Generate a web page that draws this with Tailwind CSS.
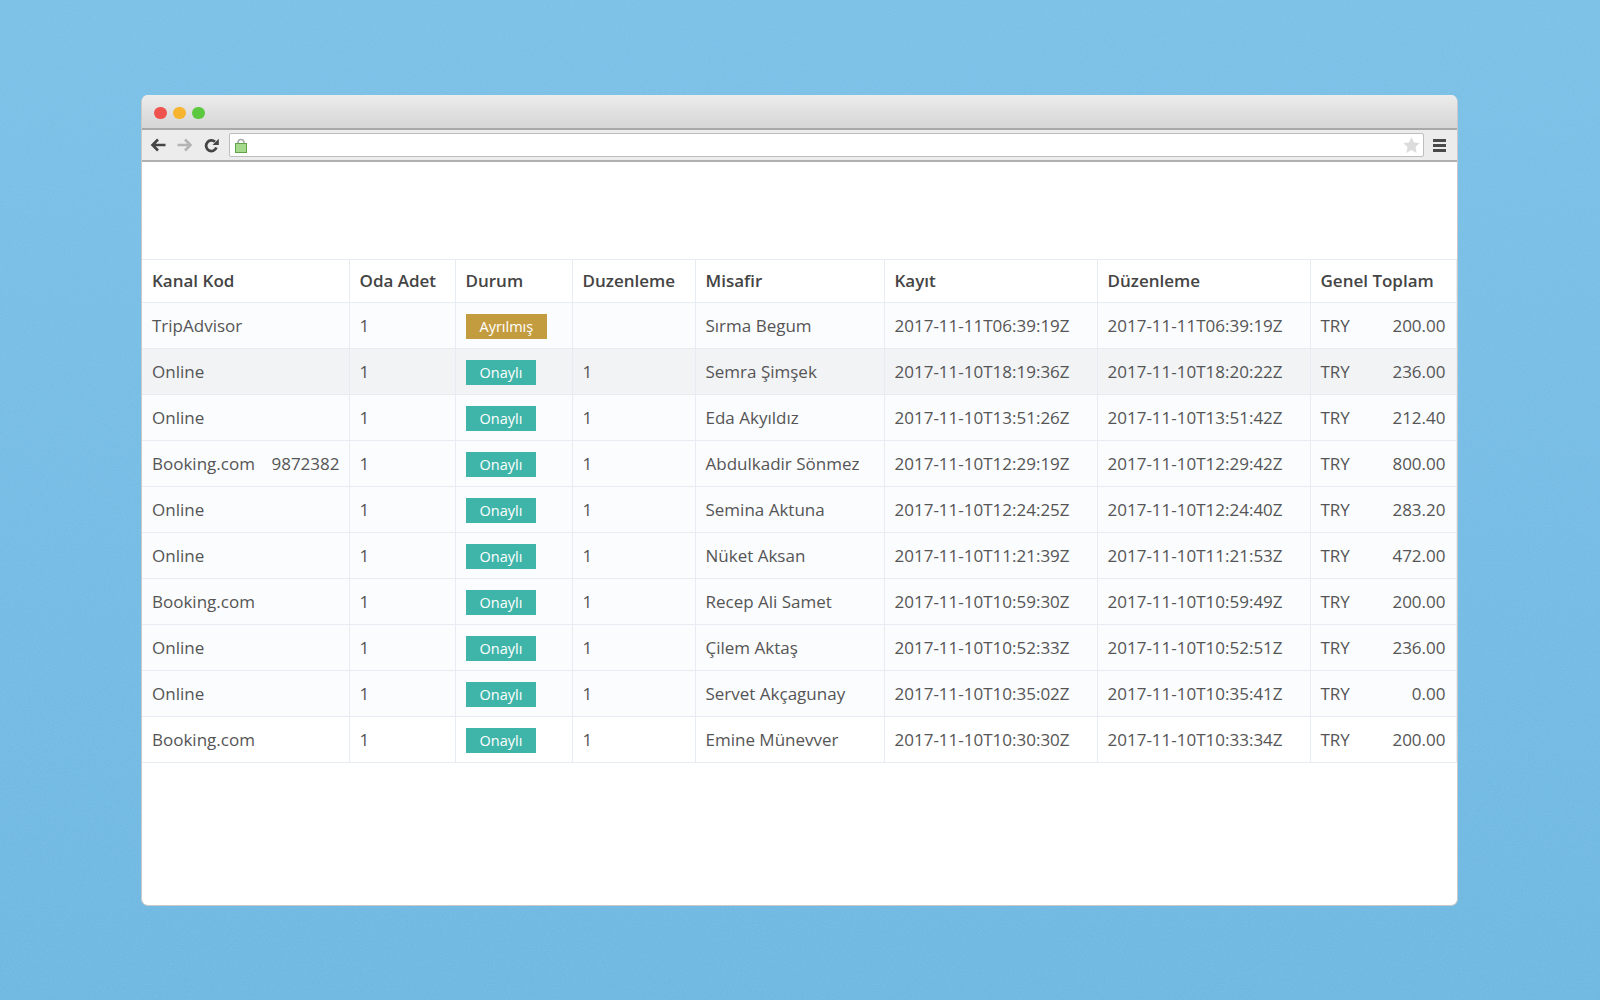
<!DOCTYPE html>
<html>
<head>
<meta charset="utf-8">
<script src="https://cdn.jsdelivr.net/npm/@tailwindcss/browser@4"></script>
</head>
<body class="m-0 relative w-[1600px] h-[1000px] overflow-hidden bg-gradient-to-b from-[#7ac0e7] to-[#6db7e1] font-['Open_Sans',sans-serif]">
<svg class="absolute inset-0 w-full h-full opacity-[0.07]" aria-hidden="true"><filter id="n"><feTurbulence type="fractalNoise" baseFrequency="0.7" numOctaves="2"/><feColorMatrix values="0 0 0 0 1  0 0 0 0 1  0 0 0 0 1  1.500 0 0 0 -0.250"/></filter><rect width="1600" height="1000" filter="url(#n)"/></svg>
<div class="relative pt-[95px] pl-[141px]">
  <div class="w-[1317px] h-[811px] rounded-[7px] overflow-hidden bg-white border border-[#c9c9c9] border-t-0 flex flex-col">
    <div class="h-[35px] shrink-0 bg-gradient-to-b from-[#ececec] to-[#d6d6d6] border-b-2 border-[#a9a9a9] flex items-center gap-[6.5px] pl-[12px] pt-[3px]">
      <span class="w-[12.5px] h-[12.5px] rounded-full bg-[#ef5350]"></span>
      <span class="w-[12.5px] h-[12.5px] rounded-full bg-[#f7b52f]"></span>
      <span class="w-[12.5px] h-[12.5px] rounded-full bg-[#5cc83f]"></span>
    </div>
    <div class="h-[32px] shrink-0 bg-[#ececec] border-b-2 border-[#b0b0b0] flex items-center">
      <div class="w-[87px] shrink-0 flex items-center pl-[8px] gap-[11px]">
        <svg width="16" height="14" viewBox="0 0 16 14" fill="none" stroke="#444" stroke-width="2.6"><path d="M15.500 7H3M8 1.500 2.500 7 8 12.500"/></svg>
        <svg width="16" height="14" viewBox="0 0 16 14" fill="none" stroke="#b4b4b4" stroke-width="2.6"><path d="M.5 7H13M8 1.500 13.500 7 8 12.500"/></svg>
        <svg width="15" height="15" viewBox="0 0 15 15" fill="none"><path d="M12.400 9.600A5.300 5.300 0 1 1 11 3.800" stroke="#444" stroke-width="2.800"/><path d="M8.500 7h6.300V.8z" fill="#444"/></svg>
      </div>
      <div class="w-[1195px] h-[24px] shrink-0 bg-white border border-[#bdbdbd] rounded-[2px] flex items-center justify-between pl-[5px] pr-[3px]">
        <svg width="12" height="15" viewBox="0 0 12 15"><path d="M3 7V4.500a3 3 0 0 1 6 0V7" fill="none" stroke="#aaa" stroke-width="1.600"/><rect x=".5" y="5.500" width="11" height="9" fill="#a5d98b" stroke="#62a24a"/></svg>
        <svg width="17" height="16" viewBox="0 0 24 23"><path d="M12 0l3.600 8 8.400.8-6.300 5.700L19.400 23 12 18.600 4.600 23l1.700-8.500L0 8.800 8.400 8z" fill="#dcdcdc"/></svg>
      </div>
      <div class="ml-[9px] w-[13px] flex flex-col gap-[2px]">
        <span class="h-[3px] bg-[#4a4a4a]"></span><span class="h-[3px] bg-[#4a4a4a]"></span><span class="h-[3px] bg-[#4a4a4a]"></span>
      </div>
    </div>
    <div class="h-[97px] shrink-0"></div>
    <table class="table-fixed border-collapse w-[1314px] text-[17px] leading-[22px] text-[#555]">
      <colgroup>
        <col class="w-[207px]"><col class="w-[106px]"><col class="w-[117px]"><col class="w-[123px]"><col class="w-[189px]"><col class="w-[213px]"><col class="w-[213px]"><col class="w-[146px]">
      </colgroup>
      <thead class="text-[#444] font-semibold text-left">
        <tr class="h-[43px]">
          <th class="border border-[#e7ecf2] border-l-0 px-[10px] font-semibold">Kanal Kod</th>
          <th class="border border-[#e7ecf2] px-[10px] font-semibold">Oda Adet</th>
          <th class="border border-[#e7ecf2] px-[10px] font-semibold">Durum</th>
          <th class="border border-[#e7ecf2] px-[10px] font-semibold">Duzenleme</th>
          <th class="border border-[#e7ecf2] px-[10px] font-semibold">Misafir</th>
          <th class="border border-[#e7ecf2] px-[10px] font-semibold">Kayıt</th>
          <th class="border border-[#e7ecf2] px-[10px] font-semibold">Düzenleme</th>
          <th class="border border-[#e7ecf2] px-[10px] font-semibold">Genel Toplam</th>
        </tr>
      </thead>
      <tbody>
        <tr class="h-[46px] bg-[#fbfcfe]">
          <td class="border border-[#e7ecf2] border-l-0 px-[10px]">TripAdvisor</td>
          <td class="border border-[#e7ecf2] px-[10px]">1</td>
          <td class="border border-[#e7ecf2] px-[10px]"><span class="inline-block align-middle mt-[1px] px-[14px] h-[25px] leading-[25px] text-[14.5px] bg-[#c49c40] text-white">Ayrılmış</span></td>
          <td class="border border-[#e7ecf2] px-[10px]"></td>
          <td class="border border-[#e7ecf2] px-[10px]">Sırma Begum</td>
          <td class="border border-[#e7ecf2] px-[10px]">2017-11-11T06:39:19Z</td>
          <td class="border border-[#e7ecf2] px-[10px]">2017-11-11T06:39:19Z</td>
          <td class="border border-[#e7ecf2] px-[10px]"><div class="flex justify-between"><span>TRY</span><span>200.00</span></div></td>
        </tr>
        <tr class="h-[46px] bg-[#f2f3f5]">
          <td class="border border-[#e7ecf2] border-l-0 px-[10px]">Online</td>
          <td class="border border-[#e7ecf2] px-[10px]">1</td>
          <td class="border border-[#e7ecf2] px-[10px]"><span class="inline-block align-middle mt-[1px] px-[14px] h-[25px] leading-[25px] text-[14.5px] bg-[#3fb5aa] text-white">Onaylı</span></td>
          <td class="border border-[#e7ecf2] px-[10px]">1</td>
          <td class="border border-[#e7ecf2] px-[10px]">Semra Şimşek</td>
          <td class="border border-[#e7ecf2] px-[10px]">2017-11-10T18:19:36Z</td>
          <td class="border border-[#e7ecf2] px-[10px]">2017-11-10T18:20:22Z</td>
          <td class="border border-[#e7ecf2] px-[10px]"><div class="flex justify-between"><span>TRY</span><span>236.00</span></div></td>
        </tr>
        <tr class="h-[46px] bg-[#fbfcfe]">
          <td class="border border-[#e7ecf2] border-l-0 px-[10px]">Online</td>
          <td class="border border-[#e7ecf2] px-[10px]">1</td>
          <td class="border border-[#e7ecf2] px-[10px]"><span class="inline-block align-middle mt-[1px] px-[14px] h-[25px] leading-[25px] text-[14.5px] bg-[#3fb5aa] text-white">Onaylı</span></td>
          <td class="border border-[#e7ecf2] px-[10px]">1</td>
          <td class="border border-[#e7ecf2] px-[10px]">Eda Akyıldız</td>
          <td class="border border-[#e7ecf2] px-[10px]">2017-11-10T13:51:26Z</td>
          <td class="border border-[#e7ecf2] px-[10px]">2017-11-10T13:51:42Z</td>
          <td class="border border-[#e7ecf2] px-[10px]"><div class="flex justify-between"><span>TRY</span><span>212.40</span></div></td>
        </tr>
        <tr class="h-[46px] bg-[#fbfcfe]">
          <td class="border border-[#e7ecf2] border-l-0 pl-[10px] pr-[9px]"><div class="flex justify-between"><span>Booking.com</span><span>9872382</span></div></td>
          <td class="border border-[#e7ecf2] px-[10px]">1</td>
          <td class="border border-[#e7ecf2] px-[10px]"><span class="inline-block align-middle mt-[1px] px-[14px] h-[25px] leading-[25px] text-[14.5px] bg-[#3fb5aa] text-white">Onaylı</span></td>
          <td class="border border-[#e7ecf2] px-[10px]">1</td>
          <td class="border border-[#e7ecf2] px-[10px]">Abdulkadir Sönmez</td>
          <td class="border border-[#e7ecf2] px-[10px]">2017-11-10T12:29:19Z</td>
          <td class="border border-[#e7ecf2] px-[10px]">2017-11-10T12:29:42Z</td>
          <td class="border border-[#e7ecf2] px-[10px]"><div class="flex justify-between"><span>TRY</span><span>800.00</span></div></td>
        </tr>
        <tr class="h-[46px] bg-[#fbfcfe]">
          <td class="border border-[#e7ecf2] border-l-0 px-[10px]">Online</td>
          <td class="border border-[#e7ecf2] px-[10px]">1</td>
          <td class="border border-[#e7ecf2] px-[10px]"><span class="inline-block align-middle mt-[1px] px-[14px] h-[25px] leading-[25px] text-[14.5px] bg-[#3fb5aa] text-white">Onaylı</span></td>
          <td class="border border-[#e7ecf2] px-[10px]">1</td>
          <td class="border border-[#e7ecf2] px-[10px]">Semina Aktuna</td>
          <td class="border border-[#e7ecf2] px-[10px]">2017-11-10T12:24:25Z</td>
          <td class="border border-[#e7ecf2] px-[10px]">2017-11-10T12:24:40Z</td>
          <td class="border border-[#e7ecf2] px-[10px]"><div class="flex justify-between"><span>TRY</span><span>283.20</span></div></td>
        </tr>
        <tr class="h-[46px] bg-[#fbfcfe]">
          <td class="border border-[#e7ecf2] border-l-0 px-[10px]">Online</td>
          <td class="border border-[#e7ecf2] px-[10px]">1</td>
          <td class="border border-[#e7ecf2] px-[10px]"><span class="inline-block align-middle mt-[1px] px-[14px] h-[25px] leading-[25px] text-[14.5px] bg-[#3fb5aa] text-white">Onaylı</span></td>
          <td class="border border-[#e7ecf2] px-[10px]">1</td>
          <td class="border border-[#e7ecf2] px-[10px]">Nüket Aksan</td>
          <td class="border border-[#e7ecf2] px-[10px]">2017-11-10T11:21:39Z</td>
          <td class="border border-[#e7ecf2] px-[10px]">2017-11-10T11:21:53Z</td>
          <td class="border border-[#e7ecf2] px-[10px]"><div class="flex justify-between"><span>TRY</span><span>472.00</span></div></td>
        </tr>
        <tr class="h-[46px] bg-[#fbfcfe]">
          <td class="border border-[#e7ecf2] border-l-0 px-[10px]">Booking.com</td>
          <td class="border border-[#e7ecf2] px-[10px]">1</td>
          <td class="border border-[#e7ecf2] px-[10px]"><span class="inline-block align-middle mt-[1px] px-[14px] h-[25px] leading-[25px] text-[14.5px] bg-[#3fb5aa] text-white">Onaylı</span></td>
          <td class="border border-[#e7ecf2] px-[10px]">1</td>
          <td class="border border-[#e7ecf2] px-[10px]">Recep Ali Samet</td>
          <td class="border border-[#e7ecf2] px-[10px]">2017-11-10T10:59:30Z</td>
          <td class="border border-[#e7ecf2] px-[10px]">2017-11-10T10:59:49Z</td>
          <td class="border border-[#e7ecf2] px-[10px]"><div class="flex justify-between"><span>TRY</span><span>200.00</span></div></td>
        </tr>
        <tr class="h-[46px] bg-[#fbfcfe]">
          <td class="border border-[#e7ecf2] border-l-0 px-[10px]">Online</td>
          <td class="border border-[#e7ecf2] px-[10px]">1</td>
          <td class="border border-[#e7ecf2] px-[10px]"><span class="inline-block align-middle mt-[1px] px-[14px] h-[25px] leading-[25px] text-[14.5px] bg-[#3fb5aa] text-white">Onaylı</span></td>
          <td class="border border-[#e7ecf2] px-[10px]">1</td>
          <td class="border border-[#e7ecf2] px-[10px]">Çilem Aktaş</td>
          <td class="border border-[#e7ecf2] px-[10px]">2017-11-10T10:52:33Z</td>
          <td class="border border-[#e7ecf2] px-[10px]">2017-11-10T10:52:51Z</td>
          <td class="border border-[#e7ecf2] px-[10px]"><div class="flex justify-between"><span>TRY</span><span>236.00</span></div></td>
        </tr>
        <tr class="h-[46px] bg-[#fbfcfe]">
          <td class="border border-[#e7ecf2] border-l-0 px-[10px]">Online</td>
          <td class="border border-[#e7ecf2] px-[10px]">1</td>
          <td class="border border-[#e7ecf2] px-[10px]"><span class="inline-block align-middle mt-[1px] px-[14px] h-[25px] leading-[25px] text-[14.5px] bg-[#3fb5aa] text-white">Onaylı</span></td>
          <td class="border border-[#e7ecf2] px-[10px]">1</td>
          <td class="border border-[#e7ecf2] px-[10px]">Servet Akçagunay</td>
          <td class="border border-[#e7ecf2] px-[10px]">2017-11-10T10:35:02Z</td>
          <td class="border border-[#e7ecf2] px-[10px]">2017-11-10T10:35:41Z</td>
          <td class="border border-[#e7ecf2] px-[10px]"><div class="flex justify-between"><span>TRY</span><span>0.00</span></div></td>
        </tr>
        <tr class="h-[46px] bg-white">
          <td class="border border-[#e7ecf2] border-l-0 px-[10px]">Booking.com</td>
          <td class="border border-[#e7ecf2] px-[10px]">1</td>
          <td class="border border-[#e7ecf2] px-[10px]"><span class="inline-block align-middle mt-[1px] px-[14px] h-[25px] leading-[25px] text-[14.5px] bg-[#3fb5aa] text-white">Onaylı</span></td>
          <td class="border border-[#e7ecf2] px-[10px]">1</td>
          <td class="border border-[#e7ecf2] px-[10px]">Emine Münevver</td>
          <td class="border border-[#e7ecf2] px-[10px]">2017-11-10T10:30:30Z</td>
          <td class="border border-[#e7ecf2] px-[10px]">2017-11-10T10:33:34Z</td>
          <td class="border border-[#e7ecf2] px-[10px]"><div class="flex justify-between"><span>TRY</span><span>200.00</span></div></td>
        </tr>
      </tbody>
    </table>
  </div>
</div>
</body>
</html>
